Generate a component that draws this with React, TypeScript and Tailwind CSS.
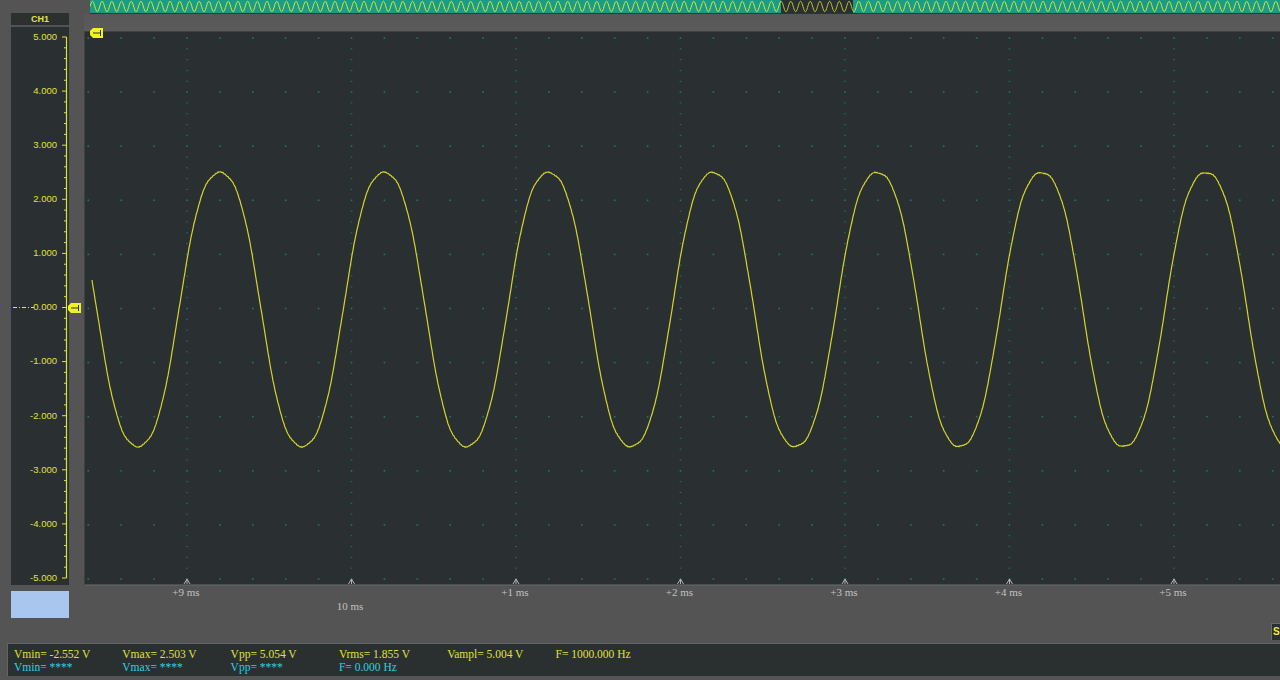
import React from 'react';

const YEL = '#e0e03a';
const CYAN = '#2ad2e2';
const DOT = '#21746c';

// grid geometry in page pixels
const rowsY = Array.from({ length: 11 }, (_, i) => 37 + i * 54.1);
const majorX = Array.from({ length: 7 }, (_, m) => 186 + m * 164.5);
const minorX: number[] = [];
for (let k = -3; 186 + k * 32.9 < 1282; k++) minorX.push(186 + k * 32.9);
const colDotsY = Array.from({ length: 51 }, (_, j) => 37 + j * 10.82).filter((_, j) => j % 5 !== 0);

const traceY = (x: number) => {
  const th = (2 * Math.PI * (x - 219)) / 164.33;
  const v = Math.cos(th) - 0.05 * Math.cos(3 * th);
  const noise = Math.sin(x * 12.9898) * 0.6 + Math.sin(x * 3.7) * 0.35;
  return 308.5 - (137 * v) / 0.95 + noise;
};

const trace = Array.from({ length: 1190 }, (_, i) => {
  const x = 91 + i;
  return `${x},${traceY(x).toFixed(1)}`;
}).join(' ');

const overview = (from: number, to: number) =>
  Array.from({ length: Math.round((to - from) * 2) + 1 }, (_, i) => {
    const x = from + i / 2;
    return `${x},${(6.5 - 5.2 * Math.sin((2 * Math.PI * x) / 9.7)).toFixed(2)}`;
  }).join(' ');

const Marker = () => (
  <svg width="13" height="10" viewBox="0 0 13 10">
    <polygon points="3,0 13,0 13,10 3,10 0,7 0,3" fill="#f2f222" />
    <line x1="3" y1="5" x2="10" y2="5" stroke="#2a2f2f" strokeWidth="1" />
    <line x1="10.5" y1="2" x2="10.5" y2="8" stroke="#2a2f2f" strokeWidth="1" />
  </svg>
);

const Scale = () => {
  const ticks = Array.from({ length: 51 }, (_, j) => ({ y: 37 + j * 10.82, major: j % 5 === 0 }));
  return (
    <svg width="58" height="558" viewBox="11 27 58 558" className="block">
      <line x1="66.5" y1="37" x2="66.5" y2="578" stroke={YEL} strokeWidth="1.2" />
      {ticks.map((t, i) => (
        <line key={i} x1={t.major ? 62 : 64} y1={t.y} x2="66.5" y2={t.y} stroke={YEL} strokeWidth="1" />
      ))}
      {rowsY.map((y, i) => {
        const v = 5 - i;
        return (
          <text key={i} x="57" y={y + 2.8} textAnchor="end" fontSize="9.5" fill={YEL} fontFamily="'Liberation Sans', Arial, sans-serif">
            {v === 0 ? '0.000' : `${v}.000`}
          </text>
        );
      })}
      <line x1="13" y1="307.5" x2="34" y2="307.5" stroke="#e8e83a" strokeWidth="1.2" strokeDasharray="4 2 1 2" />
    </svg>
  );
};

const Plot = () => (
  <svg width="1196" height="554" viewBox="84 31 1196 554" className="block">
    {rowsY.map((y, i) =>
      minorX.map((x, k) => <rect key={`${i}-${k}`} x={x - 0.8} y={y - 0.8} width="1.6" height="1.6" fill={DOT} />)
    )}
    {majorX.map((x, m) =>
      colDotsY.map((y, j) => <rect key={`${m}-${j}`} x={x - 0.8} y={y - 0.5} width="1.6" height="1" fill={DOT} />)
    )}
    {majorX.map((x) => (
      <path key={x} d={`M${x - 3},583 L${x},578 L${x + 3},583 M${x},578 L${x},583`} stroke="#b4b4b4" strokeWidth="1" fill="none" />
    ))}
    <polyline points={trace} fill="none" stroke="#d4d42a" strokeWidth="1.2" />
  </svg>
);

const Overview = () => (
  <svg width="1190" height="13" viewBox="0 0 1190 13" className="block">
    <rect x="0" y="0" width="1190" height="13" fill="#1b9c88" />
    <rect x="691" y="0" width="72" height="13" fill="#2a3030" />
    <polyline points={overview(0, 691)} fill="none" stroke="#d4ec2e" strokeWidth="1" />
    <polyline points={overview(691, 763)} fill="none" stroke="#c4c236" strokeWidth="1" />
    <polyline points={overview(763, 1190)} fill="none" stroke="#d4ec2e" strokeWidth="1" />
  </svg>
);

const AxisLabels = () => {
  const labels = ['+9 ms', '', '+1 ms', '+2 ms', '+3 ms', '+4 ms', '+5 ms'];
  return (
    <svg width="1196" height="39" viewBox="84 585 1196 39" className="block">
      {majorX.map((x, i) =>
        labels[i] ? (
          <text key={x} x={x} y="595" textAnchor="middle" fontSize="11" fill="#c2c2c2" fontFamily="'Liberation Serif', 'Times New Roman', serif">
            {labels[i]}
          </text>
        ) : null
      )}
      <text x={350} y="608.5" textAnchor="middle" fontSize="11" fill="#c2c2c2" fontFamily="'Liberation Serif', 'Times New Roman', serif">
        10 ms
      </text>
    </svg>
  );
};

const measures: { top: string; bottom?: string }[] = [
  { top: 'Vmin= -2.552 V', bottom: 'Vmin= ****' },
  { top: 'Vmax= 2.503 V', bottom: 'Vmax= ****' },
  { top: 'Vpp= 5.054 V', bottom: 'Vpp= ****' },
  { top: 'Vrms= 1.855 V', bottom: 'F= 0.000 Hz' },
  { top: 'Vampl= 5.004 V' },
  { top: 'F= 1000.000 Hz' },
];

export default function App() {
  return (
    <div className="w-[1280px] h-[680px] bg-[#545454] overflow-hidden flex flex-col select-none">
      <div className="flex h-[643px]">
        {/* ── CHANNEL SCALE ── */}
        <div className="relative w-[84px] shrink-0 pl-[11px] pt-[13px] flex flex-col">
          <div className="w-[58px] h-[12px] bg-[#2b3131] flex items-center justify-center">
            <span className="text-[9px] leading-none font-bold text-[#e4e43a]" style={{ fontFamily: "'Liberation Sans', Arial, sans-serif" }}>
              CH1
            </span>
          </div>
          <div className="mt-[2px] w-[58px] h-[558px] bg-[#2a3031]">
            <Scale />
          </div>
          <div className="mt-[6px] w-[58px] h-[27px] bg-[#a9c6ee]" />
          <div className="absolute left-[68px] top-[303px]">
            <Marker />
          </div>
        </div>

        {/* ── SCREEN ── */}
        <div className="relative flex-1 flex flex-col">
          <div className="ml-[6px] h-[14px] border-b border-[#2e3434]">
            <Overview />
          </div>
          <div className="h-[17px] bg-gradient-to-b from-[#575757] to-[#5b5b5b]" />
          <div className="h-[554px] bg-[#2a3031] border-t border-l border-[#3c4242] shadow-[inset_0_-1px_0_#4a5050]">
            <Plot />
          </div>
          <div className="h-[38px] border-t border-[#5e5e5e]">
            <AxisLabels />
          </div>
          <div className="h-[17px] flex justify-end">
            <div className="w-[10px] h-[17px] bg-[#2a3030] border-l border-t border-[#6a6a6a] flex items-center pl-[1px]">
              <span className="text-[10px] leading-[12px] font-bold text-[#eeee30]" style={{ fontFamily: "'Liberation Sans', Arial, sans-serif" }}>
                S
              </span>
            </div>
          </div>
          <div className="absolute left-[6px] top-[28px]">
            <Marker />
          </div>
        </div>
      </div>

      {/* ── MEASUREMENTS ── */}
      <div
        className="ml-[7px] h-[33px] bg-[#2a3030] border-t border-l border-[#646464] pl-[6px] pt-[4px] flex"
        style={{ fontFamily: "'Liberation Serif', 'Times New Roman', serif" }}
      >
        {measures.map((m) => (
          <div key={m.top} className="w-[108.3px] shrink-0 flex flex-col text-[11.5px] leading-[12.5px] whitespace-nowrap">
            <span className="text-[#e0e03a]">{m.top}</span>
            {m.bottom && <span style={{ color: CYAN }}>{m.bottom}</span>}
          </div>
        ))}
      </div>
    </div>
  );
}
